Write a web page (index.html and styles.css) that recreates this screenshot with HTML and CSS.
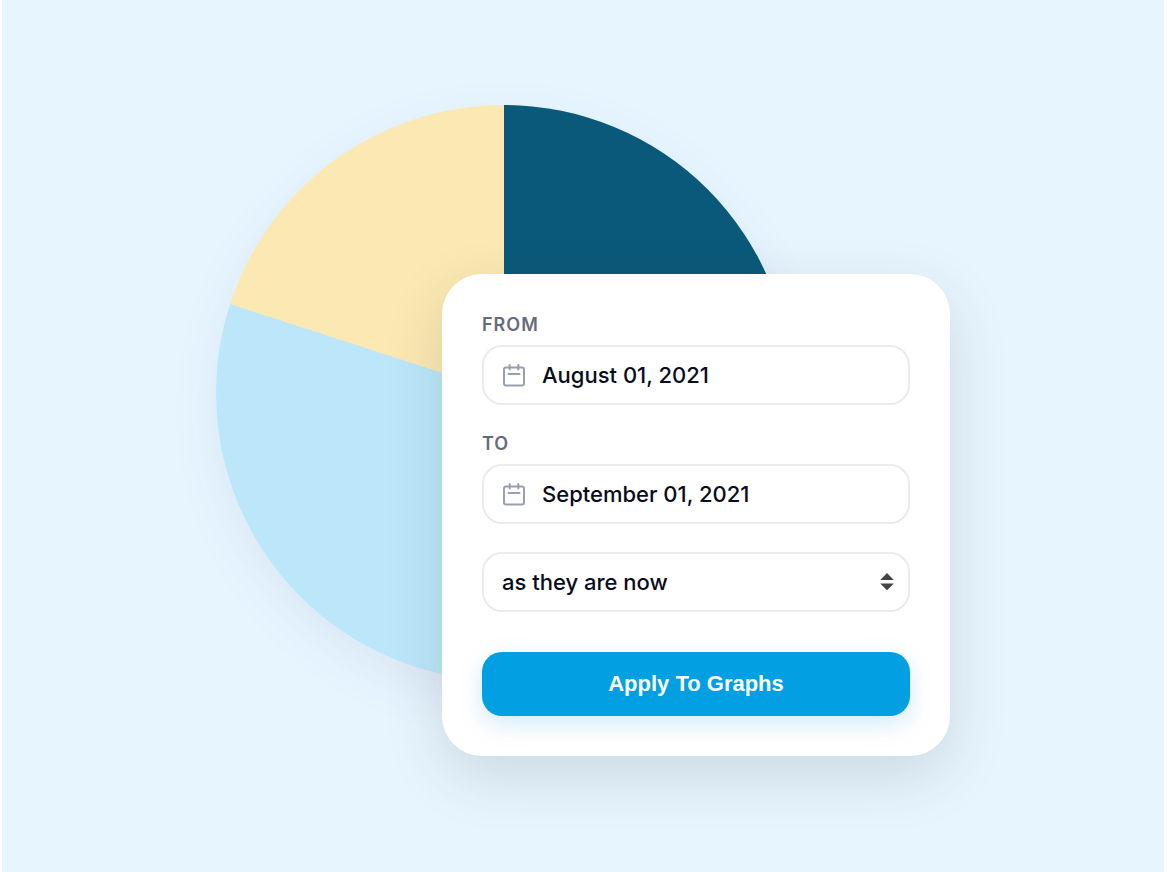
FILE: index.html
```html
<!DOCTYPE html>
<html lang="en">
<head>
<meta charset="utf-8">
<meta name="viewport" content="width=device-width, initial-scale=1">
<title>Graph date range</title>
<link rel="stylesheet" href="styles.css">
</head>
<body>
<main class="stage">
  <div class="composition">
    <div class="pie" role="img" aria-label="Pie chart with three segments"></div>
    <form class="card">
      <div class="field">
        <label class="label" for="from">FROM</label>
        <div class="control">
          <svg class="calendar" viewBox="0 0 24 24" aria-hidden="true"><rect x="2" y="4.500" width="20" height="18" rx="2"/><path d="M7.700 2v4.500M16.300 2v4.500M6.500 11h11"/></svg>
          <input class="input" id="from" type="text" value="August 01, 2021">
        </div>
      </div>
      <div class="field">
        <label class="label" for="to">TO</label>
        <div class="control">
          <svg class="calendar" viewBox="0 0 24 24" aria-hidden="true"><rect x="2" y="4.500" width="20" height="18" rx="2"/><path d="M7.700 2v4.500M16.300 2v4.500M6.500 11h11"/></svg>
          <input class="input" id="to" type="text" value="September 01, 2021">
        </div>
      </div>
      <div class="control control-select">
        <select class="input" aria-label="Graph state">
          <option>as they are now</option>
        </select>
        <svg class="arrows" viewBox="0 0 14 18" aria-hidden="true"><path d="M7 0l6.800 7H.2zM7 17.300L.2 10.500h13.600z"/></svg>
      </div>
      <button class="apply" type="button">Apply To Graphs</button>
    </form>
  </div>
</main>
</body>
</html>
```
FILE: styles.css
```css
* {
  box-sizing: border-box;
}

body {
  margin: 0;
  padding: 0 3px 0 2px;
  background: #fff;
  font-family: Inter, "Liberation Sans", sans-serif;
}

.stage {
  display: flex;
  justify-content: center;
  align-items: flex-start;
  min-height: 100vh;
  padding: 105px 24px 104px;
  background: #e7f5ff;
}

.composition {
  display: grid;
  flex: 0 1 734px;
  min-width: 0;
}

.pie,
.card {
  grid-area: 1 / 1;
}

.pie {
  justify-self: start;
  align-self: start;
  width: 100%;
  max-width: 576px;
  aspect-ratio: 1;
  border-radius: 50%;
  background: conic-gradient(#0b597a 0 35%, #bce6fa 35% 80%, #fbe8b2 80%);
  box-shadow: 0 16px 50px rgba(80, 80, 110, 0.08);
}

.card {
  justify-self: end;
  display: flex;
  flex-direction: column;
  gap: 28px;
  width: 100%;
  max-width: 508px;
  margin-top: 169px;
  padding: 40px;
  border-radius: 40px;
  background: #fff;
  box-shadow: 0 20px 60px rgba(40, 50, 50, 0.14);
}

.field {
  display: flex;
  flex-direction: column;
  gap: 10px;
}

.label {
  color: #666b7c;
  font-size: 18px;
  font-weight: 600;
  line-height: 21px;
  letter-spacing: 1px;
}

.control {
  display: flex;
  align-items: center;
  gap: 16px;
  height: 60px;
  padding: 0 18px;
  border: 2px solid #ebebec;
  border-radius: 20px;
  background: #fff;
}

.control-select {
  padding-right: 14px;
}

.calendar {
  flex: none;
  width: 24px;
  height: 24px;
  fill: none;
  stroke: #9a9fb0;
  stroke-width: 2;
  stroke-linecap: round;
}

.arrows {
  flex: none;
  width: 14px;
  height: 18px;
  fill: #444;
}

.input {
  flex: 1;
  min-width: 0;
  height: 100%;
  margin: 0;
  padding: 0;
  border: 0;
  outline: 0;
  appearance: none;
  background: transparent;
  color: #080c1c;
  font: 500 22px/28px Inter, "Liberation Sans", sans-serif;
}

.apply {
  height: 64px;
  margin-top: 12px;
  border: 0;
  border-radius: 20px;
  background: #029fe3;
  box-shadow: 0 8px 24px rgba(2, 140, 220, 0.18);
  color: #fff;
  font: 700 22px/28px "Liberation Sans", Arial, sans-serif;
  cursor: pointer;
}
```
